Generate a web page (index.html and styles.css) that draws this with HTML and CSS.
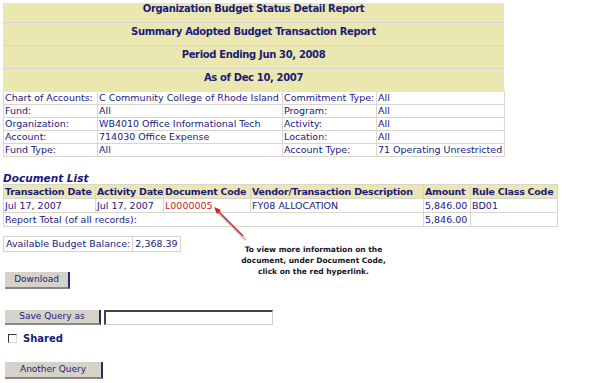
FILE: index.html
```html
<!DOCTYPE html>
<html>
<head>
<meta charset="utf-8">
<link rel="stylesheet" href="styles.css">
</head>
<body>
<div class="page">
  <table class="hdr">
    <tr><td>Organization Budget Status Detail Report</td></tr>
    <tr><td>Summary Adopted Budget Transaction Report</td></tr>
    <tr><td>Period Ending Jun 30, 2008</td></tr>
    <tr><td>As of Dec 10, 2007</td></tr>
  </table>
  <table class="info">
    <colgroup><col class="c1"><col class="c2"><col class="c3"><col class="c4"></colgroup>
    <tr><td>Chart of Accounts:</td><td>C Community College of Rhode Island</td><td>Commitment Type:</td><td>All</td></tr>
    <tr><td>Fund:</td><td>All</td><td>Program:</td><td>All</td></tr>
    <tr><td>Organization:</td><td>WB4010 Office Informational Tech</td><td>Activity:</td><td>All</td></tr>
    <tr><td>Account:</td><td>714030 Office Expense</td><td>Location:</td><td>All</td></tr>
    <tr><td>Fund Type:</td><td>All</td><td>Account Type:</td><td>71 Operating Unrestricted</td></tr>
  </table>
  <div class="doc-title">Document List</div>
  <table class="docs">
    <colgroup><col class="d1"><col class="d2"><col class="d3"><col class="d4"><col class="d5"><col class="d6"></colgroup>
    <tr class="th"><td>Transaction Date</td><td>Activity Date</td><td>Document Code</td><td>Vendor/Transaction Description</td><td>Amount</td><td>Rule Class Code</td></tr>
    <tr><td>Jul 17, 2007</td><td>Jul 17, 2007</td><td class="link">L0000005</td><td>FY08 ALLOCATION</td><td>5,846.00</td><td>BD01</td></tr>
    <tr><td colspan="4">Report Total (of all records):</td><td>5,846.00</td><td></td></tr>
  </table>
  <div class="mid">
    <table class="bal">
      <tr><td>Available Budget Balance:</td><td>2,368.39</td></tr>
    </table>
    <div class="note">To view more information on the<br>document, under Document Code,<br>click on the red hyperlink.</div>
    <svg class="arrow" width="40" height="40" viewBox="0 0 40 40">
      <line x1="33" y1="33" x2="5" y2="5" stroke="#cfcfcf" stroke-width="3" stroke-linecap="round"/>
      <line x1="31" y1="30" x2="4" y2="3" stroke="#d02020" stroke-width="1.2"/>
      <polygon points="2,1 9,4 5,8" fill="#d02020"/>
    </svg>
  </div>
  <div class="btnrow dl"><button class="btn b-dl">Download</button></div>
  <div class="btnrow save"><button class="btn b-save">Save Query as</button><input class="qname" type="text"></div>
  <label class="shared"><span class="chk"></span>Shared</label>
  <div class="btnrow another"><button class="btn b-another">Another Query</button></div>
</div>
</body>
</html>
```
FILE: styles.css
```css
html, body { margin: 0; padding: 0; background: #fff; }
body { font-family: "DejaVu Sans", Verdana, sans-serif; font-size: 9.5px; color: #1a1a7a; }
.page { padding: 3px 0 0 3px; position: relative; }
table { border-collapse: collapse; }
td { padding: 0 1px; line-height: 12px; white-space: nowrap; }

.hdr { width: 501px; background: #ebe7b0; }
.hdr td { text-align: center; font-weight: bold; font-size: 10px; height: 19px; padding: 3px 0 0; border-bottom: 1px solid #d6d6d8; vertical-align: top; line-height: 12px; letter-spacing: -0.35px; }
.hdr tr:first-child td { height: 19px; padding-top: 0; }
.hdr tr:last-child td { height: 17px; border-bottom: 0; }

.info { width: 501px; table-layout: fixed; border: 1px solid #dcd5cd; border-top: 3px solid #ebe7b0; }
.info td { border: 1px solid #dcd5cd; height: 12px; padding: 0 1px; overflow: hidden; }
.info .c1 { width: 94px; } .info .c2 { width: 185px; } .info .c3 { width: 94px; } .info .c4 { width: 128px; }

.doc-title { font-weight: bold; font-style: italic; font-size: 10.5px; margin-top: 15px; line-height: 12px; }
.docs { table-layout: fixed; width: 554px; }
.docs td { border: 1px solid #dcd5cd; height: 13px; padding: 0 1px; overflow: hidden; }
.docs .th td { background: #ebe7b0; font-weight: bold; font-size: 9.5px; letter-spacing: -0.25px; padding: 0 0 0 1px; }
.docs .d1 { width: 92px; } .docs .d2 { width: 68px; } .docs .d3 { width: 87px; } .docs .d4 { width: 173px; } .docs .d5 { width: 47px; } .docs .d6 { width: 87px; }
.link { color: #c4231c; }

.mid { position: relative; height: 36px; margin-top: 9px; }
.bal td { border: 1px solid #dcd5cd; height: 14px; padding: 0 2px; }
.note { position: absolute; left: 228px; top: 8px; width: 165px; text-align: center; font-family: "DejaVu Sans", sans-serif; font-weight: bold; font-size: 7.5px; line-height: 11px; color: #14142a; }
.arrow { position: absolute; left: 209px; top: -30px; }

.btnrow { display: flex; align-items: center; }
.btn { font-family: "DejaVu Sans", Verdana, sans-serif; font-size: 9px; color: #1a1a7a; background: #d6d2ca; border: 0; border-right: 2px solid #2b2b6b; border-bottom: 2px solid #8a8682; padding: 0; margin: 0 0 0 2px; height: 17px; line-height: 15px; }
.dl { margin-top: 0; }
.b-dl { width: 65px; }
.save { margin-top: 21px; }
.b-save { width: 96px; height: 15px; line-height: 13px; }
.qname { margin: 0 0 0 3px; width: 166px; height: 12px; padding: 0; border: 1px solid #222; border-top: 2px solid #444; border-left: 2px solid #444; border-right: 1px solid #ccc; border-bottom: 1px solid #ccc; }
.shared { display: flex; align-items: center; font-weight: bold; font-size: 10px; margin: 7px 0 0 5px; height: 12px; }
.chk { width: 7px; height: 7px; border-top: 1px solid #333; border-left: 1px solid #333; border-right: 1px solid #ddd; border-bottom: 1px solid #ddd; margin-right: 6px; background: #fff; }
.another { margin-top: 18px; }
.b-another { width: 98px; }
```
